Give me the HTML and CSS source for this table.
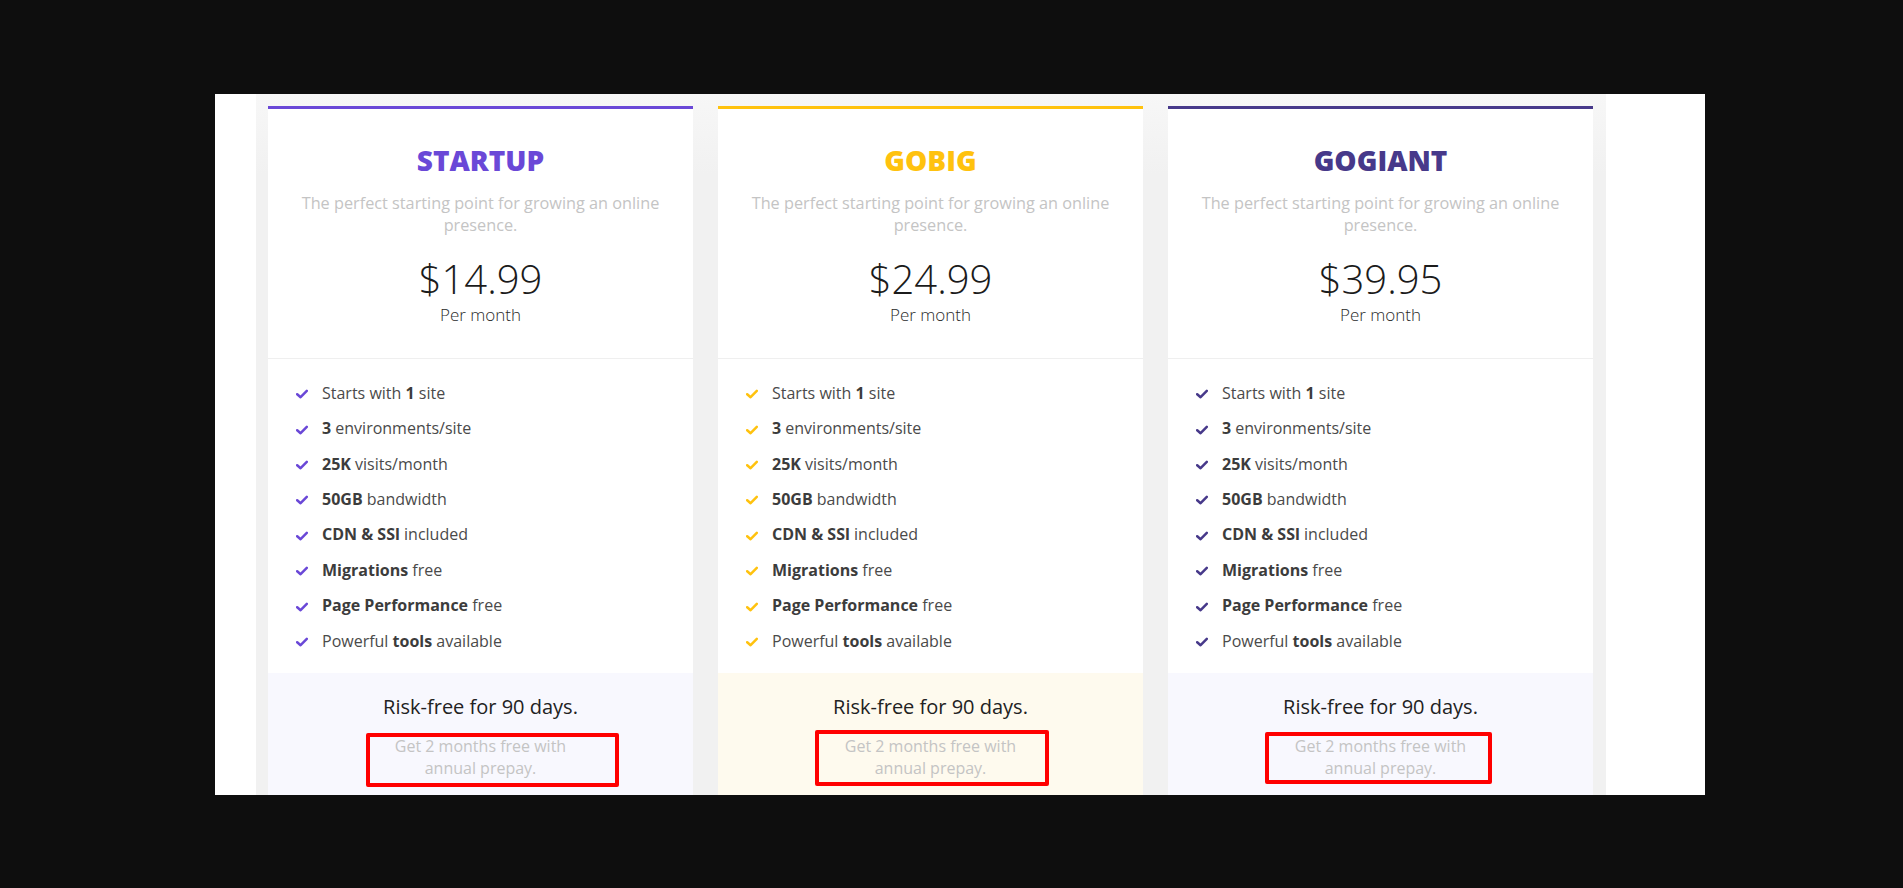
FILE: index.html
```html
<!DOCTYPE html>
<html lang="en">
<head>
<meta charset="utf-8">
<title>Pricing</title>
<link rel="stylesheet" href="styles.css">
</head>
<body>
<div class="stage">
  <div class="panel">
    <div class="plans">
      <div class="card card-startup">
        <div class="head">
          <h2 class="title">STARTUP</h2>
          <p class="desc">The perfect starting point for growing an online presence.</p>
          <div class="price">$14.99</div>
          <div class="period">Per month</div>
        </div>
        <ul class="features">
          <li><svg class="check" viewBox="0 0 12 10"><polyline points="1.2,5.2 4.6,8.2 10.8,1.8"/></svg><span>Starts with <b>1</b> site</span></li>
          <li><svg class="check" viewBox="0 0 12 10"><polyline points="1.2,5.2 4.6,8.2 10.8,1.8"/></svg><span><b>3</b> environments/site</span></li>
          <li><svg class="check" viewBox="0 0 12 10"><polyline points="1.2,5.2 4.6,8.2 10.8,1.8"/></svg><span><b>25K</b> visits/month</span></li>
          <li><svg class="check" viewBox="0 0 12 10"><polyline points="1.2,5.2 4.6,8.2 10.8,1.8"/></svg><span><b>50GB</b> bandwidth</span></li>
          <li><svg class="check" viewBox="0 0 12 10"><polyline points="1.2,5.2 4.6,8.2 10.8,1.8"/></svg><span><b>CDN &amp; SSl</b> included</span></li>
          <li><svg class="check" viewBox="0 0 12 10"><polyline points="1.2,5.2 4.6,8.2 10.8,1.8"/></svg><span><b>Migrations</b> free</span></li>
          <li><svg class="check" viewBox="0 0 12 10"><polyline points="1.2,5.2 4.6,8.2 10.8,1.8"/></svg><span><b>Page Performance</b> free</span></li>
          <li><svg class="check" viewBox="0 0 12 10"><polyline points="1.2,5.2 4.6,8.2 10.8,1.8"/></svg><span>Powerful <b>tools</b> available</span></li>
        </ul>
        <div class="foot">
          <div class="risk">Risk-free for 90 days.</div>
          <div class="prepay">Get 2 months free with annual prepay.</div>
          <div class="mark mark-a"></div>
        </div>
      </div>

      <div class="card card-gobig">
        <div class="head">
          <h2 class="title">GOBIG</h2>
          <p class="desc">The perfect starting point for growing an online presence.</p>
          <div class="price">$24.99</div>
          <div class="period">Per month</div>
        </div>
        <ul class="features">
          <li><svg class="check" viewBox="0 0 12 10"><polyline points="1.2,5.2 4.6,8.2 10.8,1.8"/></svg><span>Starts with <b>1</b> site</span></li>
          <li><svg class="check" viewBox="0 0 12 10"><polyline points="1.2,5.2 4.6,8.2 10.8,1.8"/></svg><span><b>3</b> environments/site</span></li>
          <li><svg class="check" viewBox="0 0 12 10"><polyline points="1.2,5.2 4.6,8.2 10.8,1.8"/></svg><span><b>25K</b> visits/month</span></li>
          <li><svg class="check" viewBox="0 0 12 10"><polyline points="1.2,5.2 4.6,8.2 10.8,1.8"/></svg><span><b>50GB</b> bandwidth</span></li>
          <li><svg class="check" viewBox="0 0 12 10"><polyline points="1.2,5.2 4.6,8.2 10.8,1.8"/></svg><span><b>CDN &amp; SSl</b> included</span></li>
          <li><svg class="check" viewBox="0 0 12 10"><polyline points="1.2,5.2 4.6,8.2 10.8,1.8"/></svg><span><b>Migrations</b> free</span></li>
          <li><svg class="check" viewBox="0 0 12 10"><polyline points="1.2,5.2 4.6,8.2 10.8,1.8"/></svg><span><b>Page Performance</b> free</span></li>
          <li><svg class="check" viewBox="0 0 12 10"><polyline points="1.2,5.2 4.6,8.2 10.8,1.8"/></svg><span>Powerful <b>tools</b> available</span></li>
        </ul>
        <div class="foot">
          <div class="risk">Risk-free for 90 days.</div>
          <div class="prepay">Get 2 months free with annual prepay.</div>
          <div class="mark mark-b"></div>
        </div>
      </div>

      <div class="card card-gogiant">
        <div class="head">
          <h2 class="title">GOGIANT</h2>
          <p class="desc">The perfect starting point for growing an online presence.</p>
          <div class="price">$39.95</div>
          <div class="period">Per month</div>
        </div>
        <ul class="features">
          <li><svg class="check" viewBox="0 0 12 10"><polyline points="1.2,5.2 4.6,8.2 10.8,1.8"/></svg><span>Starts with <b>1</b> site</span></li>
          <li><svg class="check" viewBox="0 0 12 10"><polyline points="1.2,5.2 4.6,8.2 10.8,1.8"/></svg><span><b>3</b> environments/site</span></li>
          <li><svg class="check" viewBox="0 0 12 10"><polyline points="1.2,5.2 4.6,8.2 10.8,1.8"/></svg><span><b>25K</b> visits/month</span></li>
          <li><svg class="check" viewBox="0 0 12 10"><polyline points="1.2,5.2 4.6,8.2 10.8,1.8"/></svg><span><b>50GB</b> bandwidth</span></li>
          <li><svg class="check" viewBox="0 0 12 10"><polyline points="1.2,5.2 4.6,8.2 10.8,1.8"/></svg><span><b>CDN &amp; SSl</b> included</span></li>
          <li><svg class="check" viewBox="0 0 12 10"><polyline points="1.2,5.2 4.6,8.2 10.8,1.8"/></svg><span><b>Migrations</b> free</span></li>
          <li><svg class="check" viewBox="0 0 12 10"><polyline points="1.2,5.2 4.6,8.2 10.8,1.8"/></svg><span><b>Page Performance</b> free</span></li>
          <li><svg class="check" viewBox="0 0 12 10"><polyline points="1.2,5.2 4.6,8.2 10.8,1.8"/></svg><span>Powerful <b>tools</b> available</span></li>
        </ul>
        <div class="foot">
          <div class="risk">Risk-free for 90 days.</div>
          <div class="prepay">Get 2 months free with annual prepay.</div>
          <div class="mark mark-c"></div>
        </div>
      </div>
    </div>
  </div>
</div>
</body>
</html>
```
FILE: styles.css
```css
html, body {
  margin: 0;
  padding: 0;
}
body {
  background: #0e0e0e;
  font-family: "Open Sans", "Noto Sans", "Liberation Sans", sans-serif;
  width: 1903px;
  height: 888px;
  overflow: hidden;
}
.stage {
  padding: 94px 0 0 215px;
}
.panel {
  width: 1490px;
  height: 701px;
  background: #ffffff;
  overflow: hidden;
  padding-left: 41px;
  box-sizing: border-box;
}
.plans {
  width: 1350px;
  height: 100%;
  box-sizing: border-box;
  padding: 12px 13px 0 12px;
  background: linear-gradient(#f7f7f7, #f1f1f1 80px);
  display: flex;
  gap: 25px;
  align-items: flex-start;
}
.card {
  width: 425px;
  flex: 0 0 425px;
  background: #ffffff;
  border-top: 3px solid var(--accent);
}
.card-startup { --accent: #6a48d7; --foot: #f8f8fe; }
.card-gobig { --accent: #ffc20e; --foot: #fefaee; }
.card-gogiant { --accent: #47398a; --foot: #f8f8fe; }

.head {
  text-align: center;
  padding: 32px 25px 32px;
  border-bottom: 1px solid #efefef;
}
.title {
  margin: 0;
  font-size: 28px;
  line-height: 38px;
  font-weight: 800;
  color: var(--accent);
}
.desc {
  margin: 13px 0 0;
  font-size: 16.25px;
  line-height: 22px;
  color: #c4c4c4;
}
.price {
  margin-top: 21px;
  font-size: 40px;
  line-height: 44px;
  font-weight: 300;
  color: #1b1b1b;
}
.period {
  margin-top: 3px;
  font-size: 17px;
  line-height: 22px;
  font-weight: 300;
  color: #2a2a2a;
}
.features {
  list-style: none;
  margin: 0;
  padding: 16px 0 15px 28px;
}
.features li {
  display: flex;
  align-items: center;
  gap: 14px;
  height: 35.43px;
  font-size: 16px;
  color: #4a4a4a;
}
.features b {
  font-weight: 700;
  color: #3c3c3c;
}
.check {
  width: 12px;
  height: 10px;
  flex: 0 0 12px;
  margin-top: 3px;
  fill: none;
  stroke: var(--accent);
  stroke-width: 2.5;
  stroke-linecap: round;
  stroke-linejoin: round;
}
.foot {
  position: relative;
  background: var(--foot);
  padding: 21px 0 40px;
  text-align: center;
}
.risk {
  font-size: 20px;
  line-height: 26px;
  color: #222222;
}
.prepay {
  margin: 15px auto 0;
  max-width: 200px;
  font-size: 16px;
  line-height: 22px;
  color: #c4c4c4;
}
.mark {
  position: absolute;
  box-sizing: border-box;
  border: 4px solid #ff0000;
  border-radius: 2px;
}
.mark-a { left: 98px; top: 60px; width: 253px; height: 54px; }
.mark-b { left: 97px; top: 57px; width: 234px; height: 56px; }
.mark-c { left: 97px; top: 59px; width: 227px; height: 52px; }
```
